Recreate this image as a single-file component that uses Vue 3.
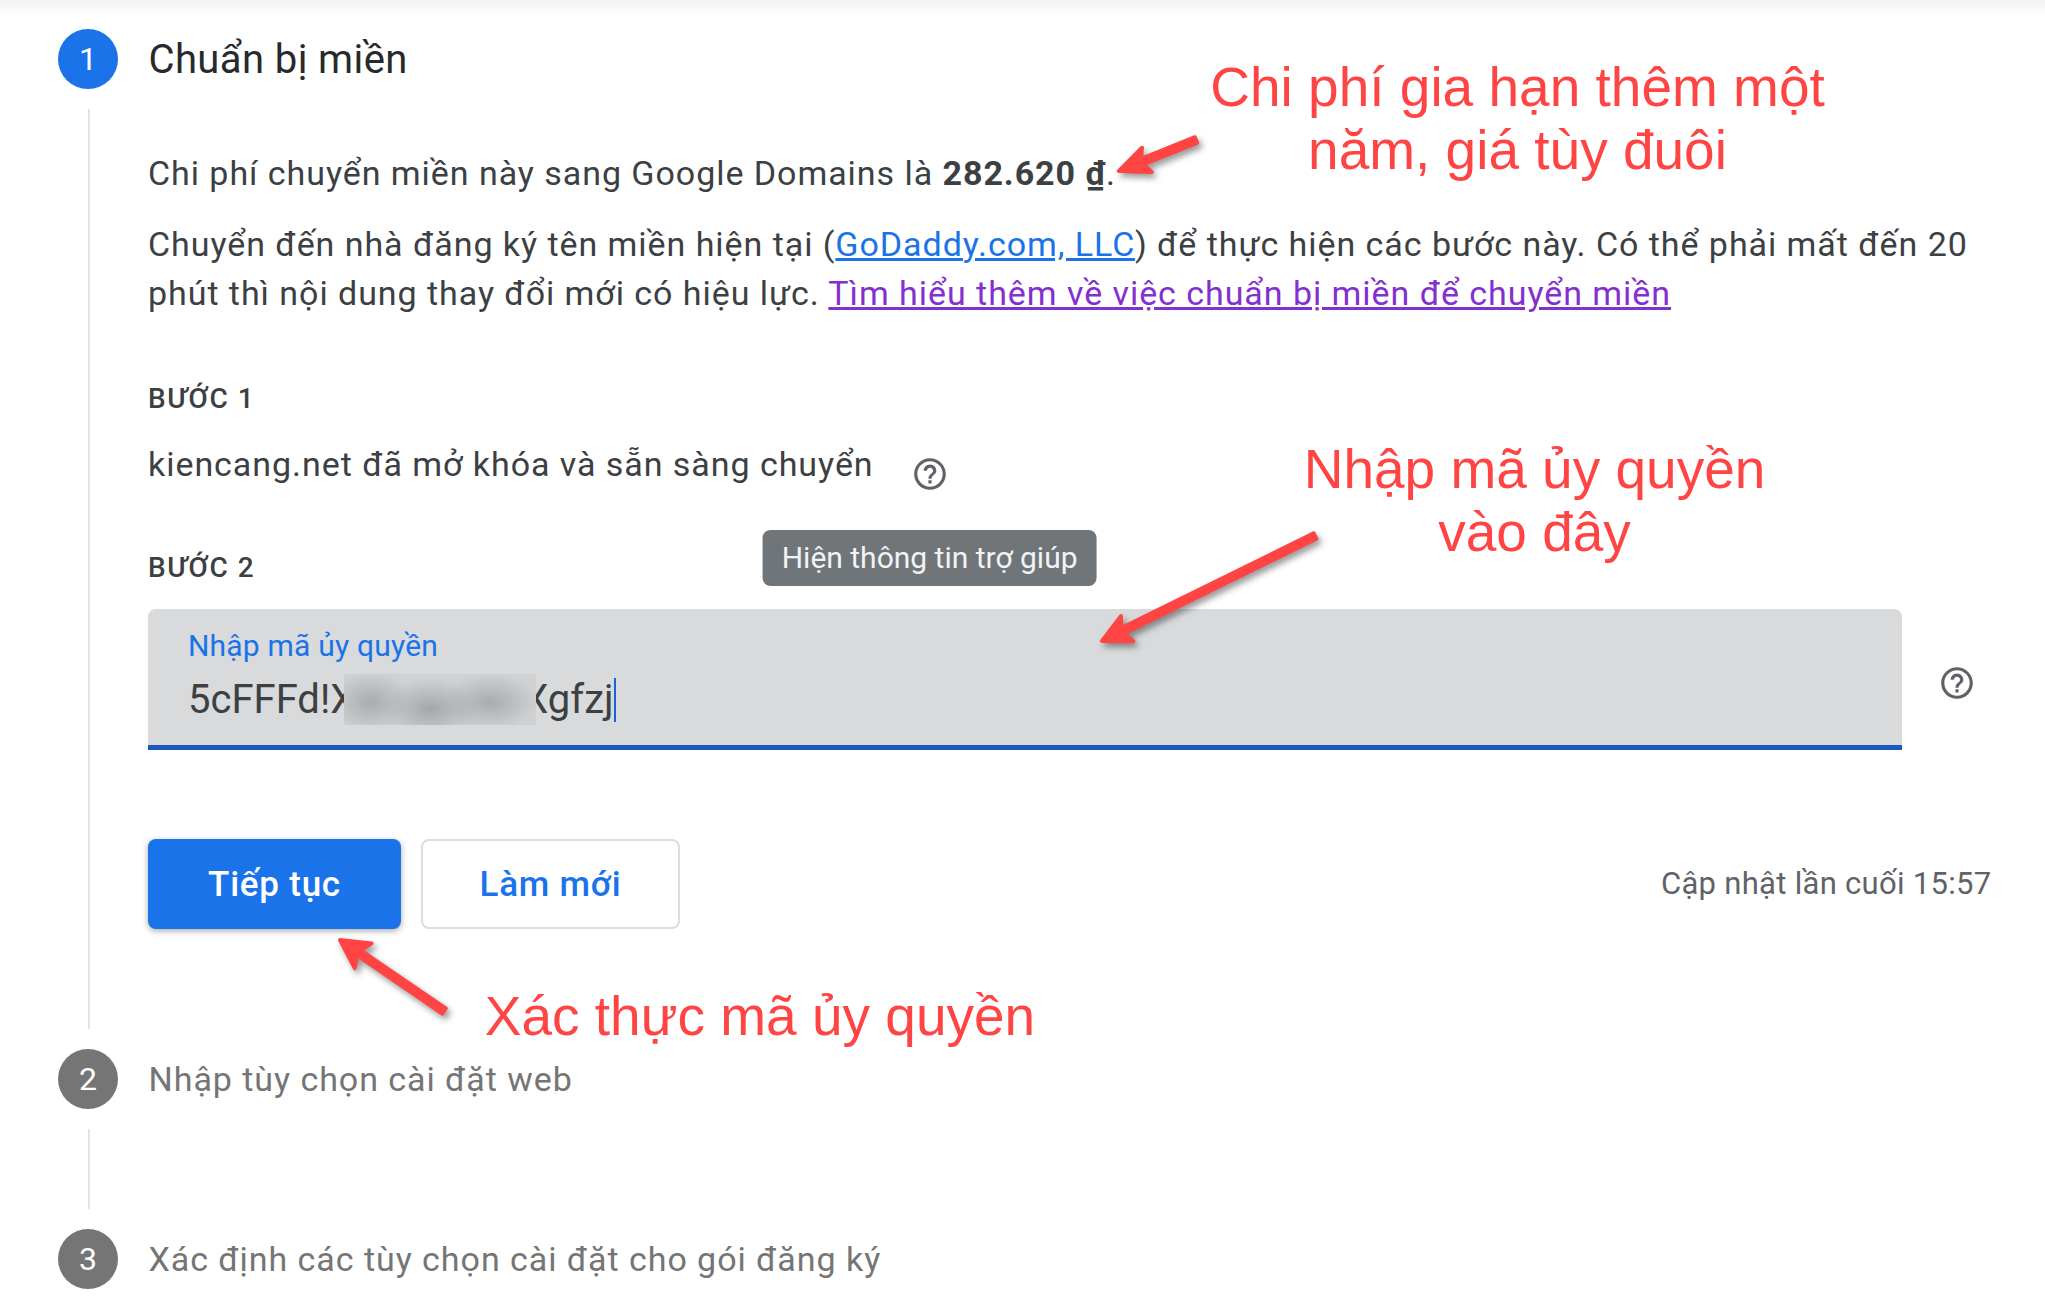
<script setup>
const help = 'M11 18h2v-2h-2v2zm1-16C6.48 2 2 6.48 2 12s4.48 10 10 10 10-4.48 10-10S17.52 2 12 2zm0 18c-4.41 0-8-3.59-8-8s3.59-8 8-8 8 3.59 8 8-3.59 8-8 8zm0-14c-2.21 0-4 1.79-4 4h2c0-1.1.9-2 2-2s2 .9 2 2c0 2-3 1.75-3 5h2c0-2.25 3-2.5 3-5 0-2.21-1.79-4-4-4z'

function arrow(tip, tail, headLen, headHalf, shaftHead, shaftTail) {
  const dx = tail[0] - tip[0], dy = tail[1] - tip[1]
  const len = Math.hypot(dx, dy)
  const ux = dx / len, uy = dy / len, nx = -uy, ny = ux
  const at = (along, off) => `${(tip[0] + ux * along + nx * off).toFixed(1)} ${(tip[1] + uy * along + ny * off).toFixed(1)}`
  return `M${at(0, 0)} L${at(headLen, headHalf)} L${at(headLen - 5, shaftHead)} L${at(len, shaftTail)} L${at(len, -shaftTail)} L${at(headLen - 5, -shaftHead)} L${at(headLen, -headHalf)} Z`
}

const arrows = [
  arrow([1119, 171], [1196, 140], 30, 13, 3, 3),
  arrow([1102, 641], [1315, 536], 28, 14, 3, 3),
  arrow([340, 940], [444, 1011], 28, 15, 3, 3)
]
</script>

<template>
  <div class="page">
    <section class="step">
      <header class="step-head">
        <span class="badge active">1</span>
        <h2 class="title">Chuẩn bị miền</h2>
      </header>
      <div class="step-body">
        <p class="para first">Chi phí chuyển miền này sang Google Domains là <b>282.620 ₫</b>.</p>
        <p class="para second">Chuyển đến nhà đăng ký tên miền hiện tại (<a class="link">GoDaddy.com, LLC</a>) để thực hiện các bước này. Có thể phải mất đến 20 phút thì nội dung thay đổi mới có hiệu lực. <a class="link visited">Tìm hiểu thêm về việc chuẩn bị miền để chuyển miền</a></p>

        <div class="label one">BƯỚC 1</div>
        <div class="unlock">
          <span class="para">kiencang.net đã mở khóa và sẵn sàng chuyển</span>
          <span class="help-wrap">
            <svg class="help" viewBox="0 0 24 24"><path :d="help" /></svg>
            <span class="tooltip">Hiện thông tin trợ giúp</span>
          </span>
        </div>

        <div class="label two">BƯỚC 2</div>
        <div class="field-row">
          <div class="field">
            <div class="field-label">Nhập mã ủy quyền</div>
            <div class="field-value"><span>5cFFFd!X</span><span class="blur"></span><span>Xgfzj</span><span class="caret"></span></div>
          </div>
          <svg class="help field-help" viewBox="0 0 24 24"><path :d="help" /></svg>
        </div>

        <div class="actions">
          <button class="btn primary">Tiếp tục</button>
          <button class="btn ghost">Làm mới</button>
          <span class="updated">Cập nhật lần cuối 15:57</span>
        </div>
      </div>
    </section>

    <section class="step">
      <header class="step-head">
        <span class="badge">2</span>
        <h3 class="sub">Nhập tùy chọn cài đặt web</h3>
      </header>
      <div class="step-body empty"></div>
    </section>

    <section class="step">
      <header class="step-head">
        <span class="badge">3</span>
        <h3 class="sub">Xác định các tùy chọn cài đặt cho gói đăng ký</h3>
      </header>
    </section>

    <svg class="arrows" viewBox="0 0 2045 1311">
      <path v-for="(d, i) in arrows" :key="i" :d="d" />
    </svg>
    <div class="note note-a">Chi phí gia hạn thêm một<br />năm, giá tùy đuôi</div>
    <div class="note note-b">Nhập mã ủy quyền<br />vào đây</div>
    <div class="note note-c">Xác thực mã ủy quyền</div>
  </div>
</template>

<style scoped>
.page {
  position: relative;
  box-sizing: border-box;
  width: 2045px;
  height: 1311px;
  overflow: hidden;
  padding-top: 29px;
  background: linear-gradient(#f1f1f1, #fff 16px);
  font-family: Roboto, "Liberation Sans", sans-serif;
  color: #3c4043;
}
.step-head {
  display: flex;
  align-items: center;
  height: 60px;
  padding-left: 58px;
}
.badge {
  flex: none;
  width: 60px;
  height: 60px;
  border-radius: 50%;
  background: #757575;
  color: #fff;
  font-size: 32px;
  line-height: 60px;
  text-align: center;
}
.badge.active {
  background: #1a73e8;
}
.title {
  margin: 0 0 0 30.5px;
  font-size: 40px;
  font-weight: 400;
  letter-spacing: .4px;
  color: #28292c;
}
.sub {
  margin: 0 0 0 30.5px;
  font-size: 34px;
  font-weight: 400;
  letter-spacing: .95px;
  color: #757575;
}
.step-body {
  margin: 20px 53.5px 20px 88px;
  padding: 40px 0 0 58px;
  height: 920px;
  box-sizing: border-box;
  border-left: 2px solid #e4e4e4;
}
.step-body.empty {
  height: 80px;
  padding: 0;
}
.para {
  margin: 0;
  font-size: 34px;
  line-height: 49.5px;
  letter-spacing: .95px;
}
.para b {
  font-weight: 700;
}
.second {
  margin-top: 21px;
}
.link {
  color: #1a73e8;
  text-decoration: underline;
}
.link.visited {
  color: #8430ce;
}
.label {
  font-size: 28px;
  line-height: 30px;
  font-weight: 500;
  letter-spacing: 1.5px;
}
.label.one {
  margin-top: 65.5px;
}
.label.two {
  margin-top: 59.5px;
}
.unlock {
  display: flex;
  margin-top: 25.5px;
}
.help-wrap {
  position: relative;
  margin: 15.5px 0 0 37px;
  width: 38px;
  height: 38px;
}
.help {
  display: block;
  width: 38px;
  height: 38px;
  fill: #5f6368;
}
.tooltip {
  position: absolute;
  top: 74.5px;
  left: 50%;
  transform: translateX(-50%);
  box-sizing: border-box;
  height: 56px;
  padding: 0 19.5px;
  border-radius: 8px;
  background: #707579;
  color: #f1f3f4;
  font-size: 30px;
  line-height: 56px;
  white-space: nowrap;
}
.field-row {
  display: flex;
  margin-top: 26px;
}
.field {
  box-sizing: border-box;
  width: 1754px;
  height: 141px;
  padding: 19px 0 0 40px;
  border-radius: 8px 8px 0 0;
  border-bottom: 5px solid #1a5abf;
  background: #d8dadc;
}
.field-label {
  font-size: 30px;
  line-height: 36px;
  letter-spacing: .2px;
  color: #1a73e8;
}
.field-value {
  display: flex;
  align-items: center;
  height: 62px;
  margin-top: 5px;
  font-size: 40px;
  color: #3c4043;
}
.blur {
  position: relative;
  z-index: 1;
  width: 192px;
  height: 51px;
  margin: 0 -13px 0 -11px;
  background:
    radial-gradient(ellipse 42px 30px at 14% 55%, #a9acae, transparent),
    radial-gradient(ellipse 48px 30px at 45% 68%, #a4a7a9, transparent),
    radial-gradient(ellipse 48px 28px at 76% 55%, #a9acae, transparent),
    #cfd1d3;
}
.caret {
  width: 2px;
  height: 44px;
  background: #1a62d6;
}
.field-help {
  margin: 55px 0 0 36px;
}
.actions {
  display: flex;
  align-items: center;
  gap: 20px;
  margin-top: 89px;
}
.btn {
  box-sizing: border-box;
  height: 90px;
  padding-top: 2px;
  border-radius: 8px;
  font-family: inherit;
  font-size: 35px;
  font-weight: 500;
  letter-spacing: .75px;
}
.primary {
  width: 253px;
  border: none;
  background: #1a73e8;
  color: #fff;
  box-shadow: 0 2px 6px rgba(60, 64, 67, .45);
}
.ghost {
  width: 259px;
  border: 2px solid #dadce0;
  background: #fff;
  color: #1a73e8;
}
.updated {
  margin-left: auto;
  font-size: 31px;
  letter-spacing: .3px;
  color: #5f6368;
}
.arrows {
  position: absolute;
  z-index: 2;
  inset: 0;
  width: 2045px;
  height: 1311px;
  filter: drop-shadow(3px 4px 3px rgba(0, 0, 0, .4));
}
.arrows path {
  fill: #ff4444;
  stroke: #ff4444;
  stroke-width: 4px;
  stroke-linejoin: round;
}
.note {
  position: absolute;
  font-family: "Liberation Sans", Arial, sans-serif;
  font-size: 55px;
  line-height: 62.6px;
  color: #ff4444;
  text-align: center;
  white-space: nowrap;
  transform: translateX(-50%);
}
.note-a {
  left: 1517.5px;
  top: 56px;
}
.note-b {
  left: 1534.5px;
  top: 438px;
}
.note-c {
  left: 760px;
  top: 985px;
}
</style>
